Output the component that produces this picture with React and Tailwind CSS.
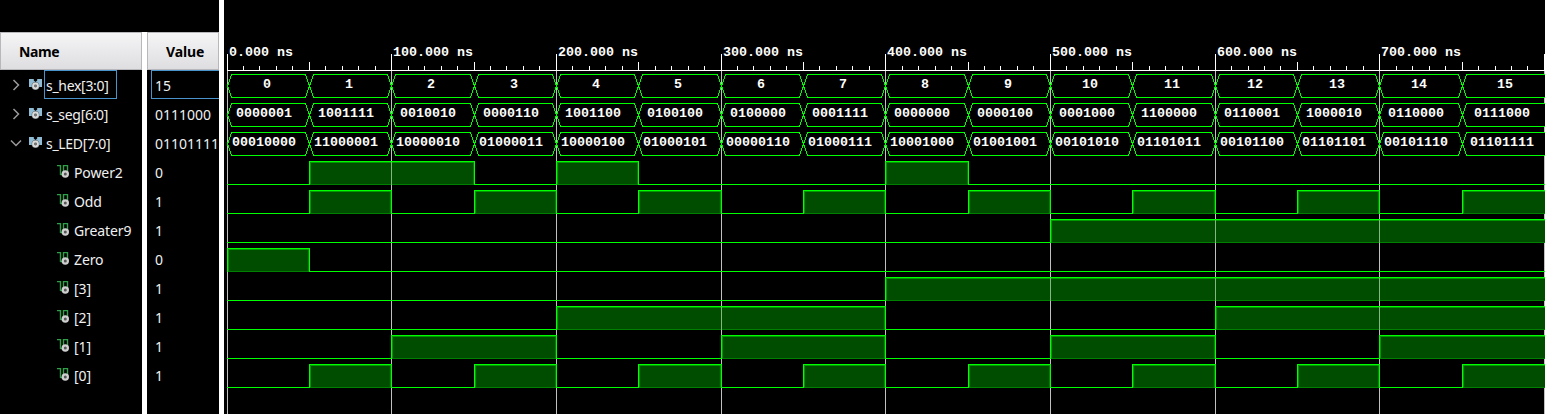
const X = Array.from({ length: 17 }, (_, i) => Math.floor(227 + 82.34 * i) - 224);

const HEX = Array.from({ length: 16 }, (_, i) => String(i));
const SEG = ['0000001', '1001111', '0010010', '0000110', '1001100', '0100100', '0100000', '0001111', '0000000', '0000100', '0001000', '1100000', '0110001', '1000010', '0110000', '0111000'];
const LED = ['00010000', '11000001', '10000010', '01000011', '10000100', '01000101', '00000110', '01000111', '10001000', '01001001', '00101010', '01101011', '00101100', '01101101', '00101110', '01101111'];

const BUSES = [
  { name: 's_hex[3:0]', value: '15', cells: HEX },
  { name: 's_seg[6:0]', value: '0111000', cells: SEG },
  { name: 's_LED[7:0]', value: '01101111', cells: LED, open: true },
];

// Each run is [first, end) in 50 ns steps during which the signal is high.
const ODD = [1, 3, 5, 7, 9, 11, 13, 15].map((n) => [n, n + 1]);
const SIGNALS = [
  { name: 'Power2', value: '0', runs: [[1, 3], [4, 5], [8, 9]] },
  { name: 'Odd', value: '1', runs: ODD },
  { name: 'Greater9', value: '1', runs: [[10, 16]] },
  { name: 'Zero', value: '0', runs: [[0, 1]] },
  { name: '[3]', value: '1', runs: [[8, 16]] },
  { name: '[2]', value: '1', runs: [[4, 8], [12, 16]] },
  { name: '[1]', value: '1', runs: [[2, 4], [6, 8], [10, 12], [14, 16]] },
  { name: '[0]', value: '1', runs: ODD },
];

function Chevron({ open }) {
  return (
    <svg className="h-3 w-3 shrink-0" viewBox="0 0 12 12" fill="none" stroke="#9a9a9a" strokeWidth="1.5">
      <path d={open ? 'M1 3.5 6 8.5 11 3.5' : 'M3.5 1 8.5 6 3.5 11'} />
    </svg>
  );
}

function BusIcon() {
  return (
    <svg className="h-[13px] w-[13px] shrink-0" viewBox="0 -1 13 13">
      <path d="M0 0H4.8V1.5L6.5 3L8.2 1.5V0H13V8H0Z" fill="#8fbcd4" />
      <circle cx="6.5" cy="7" r="3.9" fill="#5c6468" />
      <circle cx="6.5" cy="7" r="2.4" fill="#555" stroke="#dadada" strokeWidth="2" />
      <circle cx="6.5" cy="7" r="0.7" fill="#888" />
    </svg>
  );
}

function SignalIcon() {
  return (
    <svg className="h-[13px] w-3 shrink-0" viewBox="0 0 12 13" fill="none">
      <path d="M0 .5H3.5V10M6.5 9.5V.5H10.5V7M3.5 9.5H7" stroke="#2f9f4a" strokeWidth="1.4" />
      <circle cx="8.3" cy="9" r="2.6" fill="#555" stroke="#cfcfcf" strokeWidth="2.2" />
    </svg>
  );
}

function Header({ children, className }) {
  return (
    <div className={`h-[38px] shrink-0 border border-[#b8b8bc] bg-linear-to-b from-[#f5f5f6] to-[#dedee1] text-sm leading-[37px] font-bold text-black ${className}`}>
      {children}
    </div>
  );
}

function Wave() {
  const ticks = Array.from({ length: 81 }, (_, k) => k);
  return (
    <svg className="block h-[414px] w-[1321px]" viewBox="0 0 1321 414" shapeRendering="crispEdges">
      {X.filter((_, i) => i % 2 === 0).map((x) => (
        <g key={x}>
          <rect x={x} y="54" width="1" height="17" fill="#fff" />
          <rect x={x} y="71" width="1" height="343" fill="#c0c0c0" />
        </g>
      ))}
      <rect x="3" y="70" width="1318" height="1" fill="#fff" />
      {ticks.map((k) => {
        const h = k % 5 === 0 ? 8 : 4;
        return <rect key={k} x={Math.floor(227 + 16.468 * k) - 224} y={70 - h} width="1" height={h} fill="#fff" />;
      })}
      {Array.from({ length: 8 }, (_, i) => (
        <text key={i} x={X[i * 2] + 2} y="56" fill="#fff" className="font-['Liberation_Mono',monospace] text-[13.33px] font-bold">
          {`${i * 100 || '0'}.000 ns`}
        </text>
      ))}
      {BUSES.map((bus, r) => {
        const t = 74.5 + 29 * r;
        return bus.cells.map((label, i) => {
          const a = X[i] + 0.5;
          const b = X[i + 1] + 0.5;
          const last = i === 15;
          const d = last
            ? `M${b + 1} ${t}H${a + 4}L${a} ${t + 11.5}L${a + 4} ${t + 23}H${b + 1}`
            : `M${a} ${t + 11.5}L${a + 4} ${t}H${b - 4}L${b} ${t + 11.5}L${b - 4} ${t + 23}H${a + 4}Z`;
          const offset = { 1: 36, 2: 32, 7: 9, 8: 5 }[label.length] + (last ? 3 : 0);
          return (
            <g key={`${r}-${i}`}>
              <path d={d} fill={last ? '#000' : 'none'} stroke="#00ff00" strokeWidth="1" />
              <text x={X[i] + offset} y={t + 13.5} fill="#fff" className="font-['Liberation_Mono',monospace] text-[13.33px] font-bold">
                {label}
              </text>
            </g>
          );
        });
      })}
      {SIGNALS.map((s, r) => {
        const t = 161 + 29 * r;
        let d = `M3 ${t + 23.5}`;
        s.runs.forEach(([from, to]) => {
          d += `H${X[from] + 0.5}M${X[from] + 0.5} ${t + 24}V${t + 0.5}H${to === 16 ? 1321 : X[to] + 0.5}`;
          if (to < 16) d += `V${t + 23.5}`;
        });
        if (s.runs[s.runs.length - 1][1] < 16) d += 'H1321';
        return (
          <g key={s.name}>
            {s.runs.map(([from, to]) => {
              const x = X[from] + 1;
              const end = to === 16 ? 1321 : X[to];
              return (
                <g key={from}>
                  <rect x={x} y={t + 1} width={end - x} height="23" fill="#004d00" />
                  <rect x={x} y={t + 23} width={end - x} height="1" fill="#008000" />
                  <rect x={x} y={t + 1} width="1" height="22" fill="#009900" />
                  {to < 16 && <rect x={end - 1} y={t + 1} width="1" height="22" fill="#008000" />}
                  <rect x={x} y={t + 1} width={end - x} height="1" fill="#009900" />
                  {X.map((g, i) => i % 2 === 0 && i > from && i < to && (
                    <rect key={i} x={g} y={t + 1} width="1" height="23" fill="#80b880" />
                  ))}
                </g>
              );
            })}
            <path d={d} fill="none" stroke="#00ff00" strokeWidth="1" />
          </g>
        );
      })}
    </svg>
  );
}

export default function App() {
  return (
    <div className="flex h-[414px] w-[1545px] overflow-hidden bg-black font-['Noto_Sans',sans-serif] text-sm text-[#f0f0f0]">
      <div className="flex w-[219px] shrink-0 flex-col">
        <div className="h-8 shrink-0" />
        <div className="flex grow">
          <div className="flex w-[142px] shrink-0 flex-col">
            <Header className="pl-[18px] tracking-[-0.4px]">Name</Header>
            {BUSES.map((b, i) => (
              <div key={b.name} className="flex h-[29px] items-center pl-[10px]">
                <Chevron open={b.open} />
                <span className="w-[7px]" />
                <BusIcon />
                <span className="w-[2px]" />
                <span className={`flex h-[29px] w-[73px] items-center border pt-0.5 pl-px tracking-[-0.3px] ${i === 0 ? 'border-[#4a94cc]' : 'border-transparent'}`}>{b.name}</span>
              </div>
            ))}
            {SIGNALS.map((s) => (
              <div key={s.name} className="flex h-[29px] items-center gap-[5px] pl-[57px] tracking-[-0.1px]">
                <SignalIcon />
                <span className="pt-0.5">{s.name}</span>
              </div>
            ))}
          </div>
          <div className="w-[5px] shrink-0 bg-white" />
          <div className="flex w-[72px] shrink-0 flex-col overflow-hidden">
            <Header className="pl-[18px] tracking-[-0.1px]">Value</Header>
            {[...BUSES, ...SIGNALS].map((s, i) => (
              <div key={s.name} className={`ml-1 flex h-[29px] w-20 items-center border pt-0.5 pl-[3px] ${i === 0 ? 'border-[#4a94cc]' : 'border-transparent'}`}>{s.value}</div>
            ))}
          </div>
        </div>
      </div>
      <div className="w-[5px] shrink-0 bg-white" />
      <Wave />
    </div>
  );
}
